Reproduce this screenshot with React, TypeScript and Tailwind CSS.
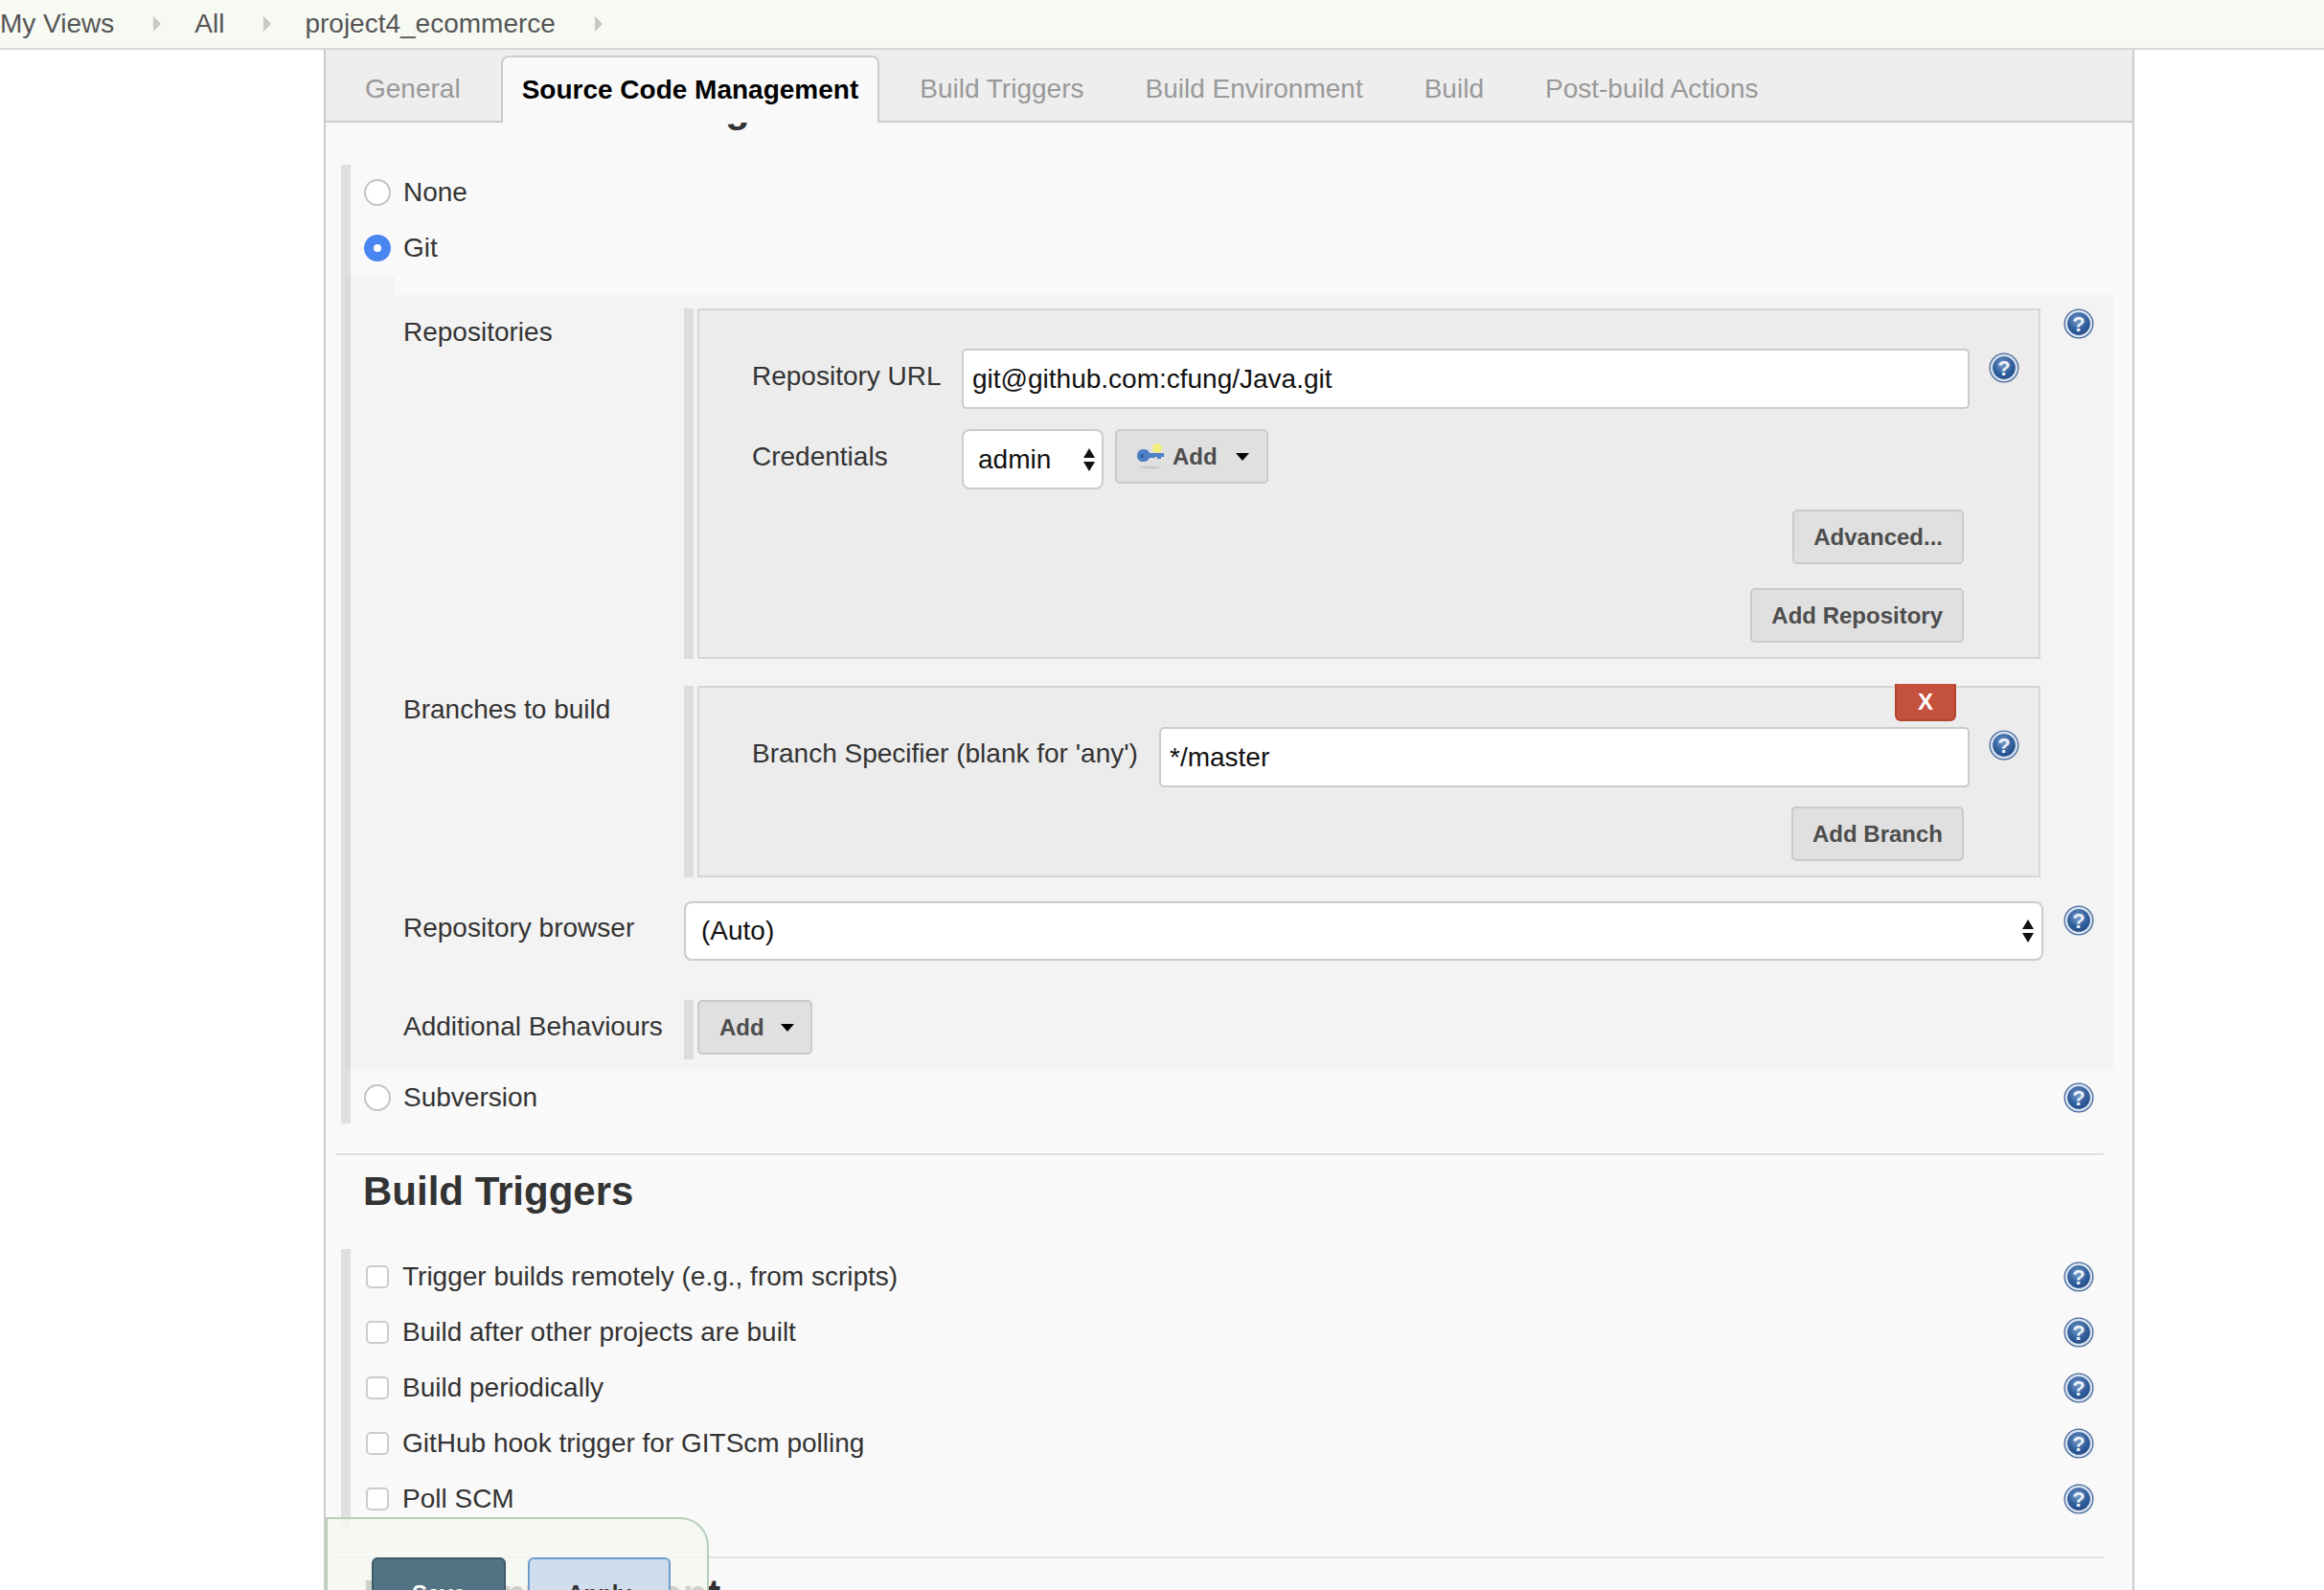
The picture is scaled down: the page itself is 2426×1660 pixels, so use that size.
import { useId } from 'react'

function HelpIcon({ className = '' }: { className?: string }) {
  const id = useId()
  return (
    <svg className={`w-8 h-8 shrink-0 ${className}`} viewBox="0 0 32 32">
      <defs>
        <radialGradient id={id} cx="45%" cy="35%" r="70%">
          <stop offset="0%" stopColor="#7c9dca" />
          <stop offset="60%" stopColor="#31609f" />
          <stop offset="100%" stopColor="#234a84" />
        </radialGradient>
      </defs>
      <circle cx="16" cy="16" r="15.5" fill="#47699c" />
      <circle cx="16" cy="16" r="13" fill="none" stroke="#d6e0ee" strokeWidth="2.500" />
      <circle cx="16" cy="16" r="11.5" fill={`url(#${id})`} />
      <text
        x="16"
        y="24"
        textAnchor="middle"
        fontSize="22"
        fontWeight="700"
        fontFamily="Liberation Sans, sans-serif"
        fill="#edf2f9"
      >
        ?
      </text>
    </svg>
  )
}

function KeyIcon() {
  return (
    <svg className="w-[30px] h-[30px] shrink-0" viewBox="0 0 30 30">
      <ellipse cx="14" cy="26" rx="11" ry="1.5" fill="#c9c9c9" />
      <circle cx="22" cy="6" r="5" fill="#f3ee7d" />
      <path
        d="M1 14c0-5 3-7 7-7 3 0 5 1.500 6 4h15v4h-3v2h-4v-2h-2l-1 1h-5c-1 2-3 4-6 4-4 0-7-2-7-6z"
        fill="#4d80c4"
      />
      <circle cx="6" cy="14" r="2" fill="#34609e" />
    </svg>
  )
}

function Caret() {
  return <span className="block w-0 h-0 border-x-[7px] border-x-transparent border-t-[8px] border-t-black" />
}

function SelectArrows() {
  return (
    <svg className="w-[14px] h-[24px] shrink-0" viewBox="0 0 14 24">
      <path d="M7 0l6 10H1z M7 24l-6-10h12z" fill="#111" />
    </svg>
  )
}

function Radio({ checked = false }: { checked?: boolean }) {
  if (checked) {
    return (
      <span className="w-7 h-7 shrink-0 rounded-full bg-[#4a86f2] flex items-center justify-center">
        <span className="w-2 h-2 rounded-full bg-white" />
      </span>
    )
  }
  return <span className="w-7 h-7 shrink-0 rounded-full border-2 border-[#c4c4c4] bg-white" />
}

function Btn({ children, className = 'px-[20px]' }: { children: React.ReactNode; className?: string }) {
  return (
    <button className={`h-[57px] rounded-[5px] border-2 border-[#cacaca] bg-[#e0e0e0] text-[#4d4d4d] text-[24px] font-bold flex items-center shrink-0 ${className}`}>
      {children}
    </button>
  )
}

function Field({ value, className = '' }: { value: string; className?: string }) {
  return (
    <div className={`h-[63px] rounded-[5px] border-2 border-[#cccccc] bg-white pl-[9px] flex items-center text-[28px] text-[#111] shrink-0 ${className}`}>
      {value}
    </div>
  )
}

function FormRow({
  label,
  children,
  help = true,
  labelClass = 'mt-px',
  helpClass = '',
  className = '',
}: {
  label: string
  children: React.ReactNode
  help?: boolean
  labelClass?: string
  helpClass?: string
  className?: string
}) {
  return (
    <div className={`flex items-start ${className}`}>
      <div className={`w-[293px] ml-[61px] h-[48px] flex items-center text-[28px] text-[#333] shrink-0 ${labelClass}`}>{label}</div>
      <div className="w-[1416px] shrink-0">{children}</div>
      {help && <HelpIcon className={`ml-[24px] ${helpClass}`} />}
    </div>
  )
}

function Heading({ children, className = '' }: { children: string; className?: string }) {
  return <h2 className={`text-[42px] leading-[48px] font-bold text-[#333] ml-[39px] ${className}`}>{children}</h2>
}

const crumbs = ['My Views', 'All', 'project4_ecommerce']
const inactiveTab = 'h-[70px] -mb-[2px] pb-px px-[20px] border-2 border-transparent flex items-center text-[28px] text-[#999]'
const triggers = [
  'Trigger builds remotely (e.g., from scripts)',
  'Build after other projects are built',
  'Build periodically',
  'GitHub hook trigger for GITScm polling',
  'Poll SCM',
]

export default function App() {
  return (
    <div className="relative w-[2426px] h-[1660px] overflow-hidden bg-white font-['Liberation_Sans',sans-serif]">
      {/* Breadcrumb */}
      <div className="h-[52px] bg-[#f7f9f3] border-b-2 border-[#d5d7d1] flex items-center text-[28px] text-[#555]">
        {crumbs.map((crumb) => (
          <div key={crumb} className="flex items-center">
            <span>{crumb}</span>
            <span className="ml-[41px] mr-[35px] w-0 h-0 border-y-[8px] border-y-transparent border-l-[8px] border-l-[#c8c8c8]" />
          </div>
        ))}
      </div>

      {/* Config panel */}
      <div className="ml-[338px] w-[1890px] h-[1608px] border-x-2 border-[#cccccc] bg-[#f9f9f9]">
        {/* Tabs */}
        <div className="relative z-10 h-[76px] bg-[#eeeeee] border-b-2 border-[#cccccc] pl-[19px] flex items-end gap-[20px]">
          <div className={inactiveTab}>General</div>
          <div className="h-[70px] -mb-[2px] pb-px px-[20px] border-2 border-b-0 border-[#cccccc] rounded-t-[8px] bg-[#f9f9f9] flex items-center text-[28px] font-bold text-black">
            Source Code Management
          </div>
          <div className={inactiveTab}>Build Triggers</div>
          <div className={inactiveTab}>Build Environment</div>
          <div className={inactiveTab}>Build</div>
          <div className={inactiveTab}>Post-build Actions</div>
        </div>

        <Heading className="-mt-[39px] mb-[35px]">Source Code Management</Heading>

        {/* SCM radio block */}
        <div className="ml-[16px] mr-[40px] border-l-[10px] border-[#e0e0e0]">
          <div className="h-[58px] pl-[14px] flex items-center gap-[13px] text-[28px] text-[#333]">
            <Radio />
            <span>None</span>
          </div>
          <div className="h-[58px] pl-[14px] flex items-center gap-[13px] text-[28px] text-[#333]">
            <Radio checked />
            <span>Git</span>
          </div>

          <div className="-ml-[6px] -mr-[20px]">
            <div className="h-[20px] w-[52px] bg-black/[0.025]" />
            <div className="bg-black/[0.025] pt-[14px] pb-[10px]">
              <FormRow label="Repositories">
                <div className="flex">
                  <div className="w-[10px] bg-[#dcdcdc] mr-[4px] shrink-0" />
                  <div className="w-[1402px] h-[366px] border-2 border-[#d6d6d6] bg-[#ececec] pt-[40px] pl-[55px] pr-[78px]">
                    <div className="flex items-start">
                      <div className="w-[219px] pt-[13px] leading-[32px] text-[28px] text-[#333] shrink-0">Repository URL</div>
                      <Field value="git@github.com:cfung/Java.git" className="w-[1052px]" />
                      <HelpIcon className="ml-[20px] mt-[4px]" />
                    </div>
                    <div className="flex items-start mt-[21px]">
                      <div className="w-[219px] pt-[13px] leading-[32px] text-[28px] text-[#333] shrink-0">Credentials</div>
                      <div className="w-[148px] h-[63px] rounded-[8px] border-2 border-[#cccccc] bg-white pl-[15px] pr-[6px] flex items-center justify-between text-[28px] text-[#111]">
                        <span>admin</span>
                        <SelectArrows />
                      </div>
                      <Btn className="ml-[12px] w-[160px] pl-[20px]">
                        <KeyIcon />
                        <span className="ml-[8px]">Add</span>
                        <span className="ml-[19px]">
                          <Caret />
                        </span>
                      </Btn>
                    </div>
                    <div className="flex justify-end mt-[21px]">
                      <Btn>Advanced...</Btn>
                    </div>
                    <div className="flex justify-end mt-[25px]">
                      <Btn>Add Repository</Btn>
                    </div>
                  </div>
                </div>
              </FormRow>

              <FormRow label="Branches to build" className="mt-[28px]" help={false}>
                <div className="flex">
                  <div className="w-[10px] bg-[#dcdcdc] mr-[4px] shrink-0" />
                  <div className="relative w-[1402px] h-[200px] border-2 border-[#d6d6d6] bg-[#ececec] pt-[41px] pl-[55px] pr-[78px]">
                    <button className="absolute -top-[4px] right-[86px] w-[64px] h-[39px] rounded-b-[6px] border-2 border-t-0 border-[#b5452f] bg-[#c4513d] text-white text-[24px] font-bold">
                      X
                    </button>
                    <div className="flex items-start">
                      <div className="w-[425px] pt-[12px] leading-[32px] text-[28px] text-[#333] shrink-0">Branch Specifier (blank for 'any')</div>
                      <Field value="*/master" className="w-[846px]" />
                      <HelpIcon className="ml-[20px] mt-[3px]" />
                    </div>
                    <div className="flex justify-end mt-[20px]">
                      <Btn>Add Branch</Btn>
                    </div>
                  </div>
                </div>
              </FormRow>

              <FormRow label="Repository browser" className="mt-[25px]" labelClass="mt-[4px]" helpClass="mt-[4px]">
                <div className="w-[1419px] h-[62px] rounded-[8px] border-2 border-[#cccccc] bg-white pl-[16px] pr-[7px] flex items-center justify-between text-[28px] text-[#111]">
                  <span>(Auto)</span>
                  <SelectArrows />
                </div>
              </FormRow>

              <div className="flex items-start mt-[41px]">
                <div className="w-[293px] ml-[61px] mt-[4px] h-[48px] flex items-center text-[28px] text-[#333] shrink-0">Additional Behaviours</div>
                <div className="w-[10px] h-[62px] bg-[#dcdcdc] mr-[4px] shrink-0" />
                <Btn className="w-[120px] pl-[21px]">
                  <span>Add</span>
                  <span className="ml-[17px]">
                    <Caret />
                  </span>
                </Btn>
              </div>
            </div>
          </div>

          <div className="h-[57px] pl-[14px] pt-[2px] flex items-center justify-between text-[28px] text-[#333]">
            <div className="flex items-center gap-[13px]">
              <Radio />
              <span>Subversion</span>
            </div>
            <HelpIcon />
          </div>
        </div>

        {/* Build Triggers */}
        <div className="h-[2px] bg-[#e0e0e0] ml-[10px] mr-[30px] mt-[31px]" />
        <Heading className="mt-[14px] mb-[36px]">Build Triggers</Heading>
        <div className="ml-[16px] mr-[40px] border-l-[10px] border-[#e0e0e0]">
          {triggers.map((trigger) => (
            <div key={trigger} className="h-[58px] pl-[16px] flex items-center text-[28px] text-[#333]">
              <span className="w-6 h-6 shrink-0 rounded-[5px] border-2 border-[#cccccc] bg-white" />
              <span className="ml-[14px]">{trigger}</span>
              <HelpIcon className="ml-auto" />
            </div>
          ))}
        </div>
        <div className="h-[2px] bg-[#e0e0e0] ml-[10px] mr-[30px] mt-[31px]" />
        <Heading className="mt-[14px]">Build Environment</Heading>
      </div>

      {/* Sticky save bar */}
      <div className="absolute left-[340px] top-[1584px] w-[400px] h-[120px] z-20 border-2 border-[#b5cfbb] rounded-tr-[30px] bg-[#f5f9f1]/80 pt-[40px] pl-[46px] flex gap-[23px]">
        <button className="w-[140px] h-[76px] rounded-[6px] border-2 border-[#3e5a6a] bg-[#527383] text-white text-[24px] font-bold">Save</button>
        <button className="w-[149px] h-[76px] rounded-[6px] border-2 border-[#6f9bd1] bg-[#d0dded] text-[#333] text-[24px] font-bold">Apply</button>
      </div>
    </div>
  )
}
